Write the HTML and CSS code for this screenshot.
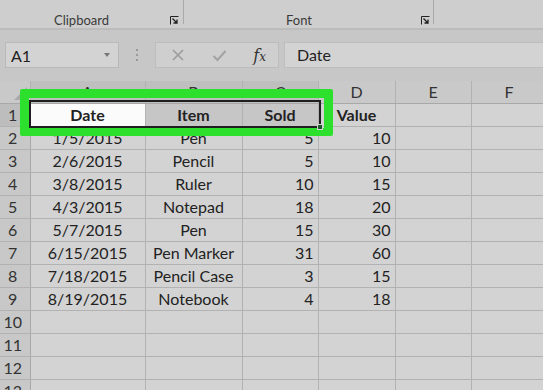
FILE: index.html
```html
<!DOCTYPE html>
<html lang="en">
<head>
  <meta charset="UTF-8">
  <title>Sheet - Date, Item, Sold</title>
  <link rel="stylesheet" href="styles.css">
</head>
<body>
  <div class="window">
    <!-- Ribbon (bottom edge only) -->
    <div class="ribbon">
      <div class="group group-clipboard">
        <span class="group-label">Clipboard</span>
        <svg class="launcher" width="9" height="9" viewBox="0 0 9 9"><path d="M0.5 8.5V0.5H8.5" fill="none" stroke="#222" stroke-width="1"/><path d="M2.5 2.5L7 7M7 3.5V7H3.5" fill="none" stroke="#222" stroke-width="1.3"/></svg>
      </div>
      <div class="group group-font">
        <span class="group-label">Font</span>
        <svg class="launcher" width="9" height="9" viewBox="0 0 9 9"><path d="M0.5 8.5V0.5H8.5" fill="none" stroke="#222" stroke-width="1"/><path d="M2.5 2.5L7 7M7 3.5V7H3.5" fill="none" stroke="#222" stroke-width="1.3"/></svg>
      </div>
      <div class="group group-rest"></div>
    </div>

    <!-- Name box + formula bar -->
    <div class="formula-row">
      <div class="name-box">
        <span>A1</span>
        <span class="caret"></span>
      </div>
      <div class="grip"><i></i><i></i><i></i></div>
      <div class="fx-buttons">
        <svg width="14" height="14" viewBox="0 0 14 14"><path d="M2 2L12 12M12 2L2 12" stroke="#9c9c9c" stroke-width="1.6"/></svg>
        <svg width="15" height="13" viewBox="0 0 15 13"><path d="M1.5 7L5.5 11L13.5 2" fill="none" stroke="#a3a3a3" stroke-width="2"/></svg>
        <span class="fx">f<small>x</small></span>
      </div>
      <div class="formula-input">Date</div>
    </div>

    <!-- Grid -->
    <div class="sheet">
      <table class="grid">
        <colgroup>
          <col class="c-row"><col class="c-a"><col class="c-b"><col class="c-c"><col class="c-d"><col class="c-e"><col class="c-f">
        </colgroup>
        <thead>
          <tr>
            <th class="corner"><span class="corner-mark"></span></th>
            <th class="col-sel">A</th><th class="col-sel">B</th><th class="col-sel">C</th><th>D</th><th>E</th><th>F</th>
          </tr>
        </thead>
        <tbody>
          <tr class="head-row">
            <th class="row-sel">1</th>
            <td class="active">Date</td><td class="sel">Item</td><td class="sel">Sold</td><td class="center">Value</td><td></td><td></td>
          </tr>
          <tr><th>2</th><td class="center">1/5/2015</td><td class="center">Pen</td><td class="num">5</td><td class="num">10</td><td></td><td></td></tr>
          <tr><th>3</th><td class="center">2/6/2015</td><td class="center">Pencil</td><td class="num">5</td><td class="num">10</td><td></td><td></td></tr>
          <tr><th>4</th><td class="center">3/8/2015</td><td class="center">Ruler</td><td class="num">10</td><td class="num">15</td><td></td><td></td></tr>
          <tr><th>5</th><td class="center">4/3/2015</td><td class="center">Notepad</td><td class="num">18</td><td class="num">20</td><td></td><td></td></tr>
          <tr><th>6</th><td class="center">5/7/2015</td><td class="center">Pen</td><td class="num">15</td><td class="num">30</td><td></td><td></td></tr>
          <tr><th>7</th><td class="center">6/15/2015</td><td class="center">Pen Marker</td><td class="num">31</td><td class="num">60</td><td></td><td></td></tr>
          <tr><th>8</th><td class="center">7/18/2015</td><td class="center">Pencil Case</td><td class="num">3</td><td class="num">15</td><td></td><td></td></tr>
          <tr><th>9</th><td class="center">8/19/2015</td><td class="center">Notebook</td><td class="num">4</td><td class="num">18</td><td></td><td></td></tr>
          <tr><th>10</th><td></td><td></td><td></td><td></td><td></td><td></td></tr>
          <tr><th>11</th><td></td><td></td><td></td><td></td><td></td><td></td></tr>
          <tr><th>12</th><td></td><td></td><td></td><td></td><td></td><td></td></tr>
          <tr><th>13</th><td></td><td></td><td></td><td></td><td></td><td></td></tr>
        </tbody>
      </table>

      <!-- Overlays: green callout and cell selection -->
      <div class="callout"></div>
      <div class="selection"><span class="fill-handle"></span></div>
    </div>
  </div>
</body>
</html>
```

FILE: styles.css
```css
* {
  margin: 0;
  padding: 0;
  box-sizing: border-box;
}

body {
  font-family: Lato, 'Open Sans', sans-serif;
  background-color: #c9c9c9;
  color: #222;
}

.window {
  width: 543px;
  height: 390px;
  overflow: hidden;
}

/* Ribbon */
.ribbon {
  display: flex;
  height: 30px;
  background-color: #cecece;
  border-bottom: 2px solid #bcbcbc;
}

.group {
  display: flex;
  align-items: flex-end;
  height: 24px;
  border-right: 1px solid #a9a9a9;
}

.group-clipboard {
  width: 184px;
}

.group-clipboard .group-label {
  width: 163px;
}

.group-font {
  width: 250px;
}

.group-font .group-label {
  width: 230px;
}

.group-rest {
  flex: 1;
  border-right: none;
}

.group-label {
  font-size: 13px;
  color: #3a3a3a;
  text-align: center;
  line-height: 15px;
  margin-bottom: -4px;
}

.launcher {
  margin-left: 7px;
  margin-bottom: -1px;
}

/* Formula row */
.formula-row {
  display: flex;
  align-items: center;
  height: 51px;
  padding-left: 5px;
  padding-bottom: 1px;
  background-color: #c7c7c7;
}

.name-box {
  display: flex;
  align-items: center;
  justify-content: space-between;
  width: 114px;
  height: 26px;
  padding: 0 8px 0 5px;
  background-color: #d3d3d3;
  border: 1px solid #b9b9b9;
  font-size: 16px;
}

.caret {
  width: 0;
  height: 0;
  border-left: 3px solid transparent;
  border-right: 3px solid transparent;
  border-top: 4px solid #777;
}

.grip {
  display: flex;
  flex-direction: column;
  gap: 3px;
  width: 36px;
  align-items: center;
}

.grip i {
  width: 2px;
  height: 2px;
  background-color: #999;
}

.fx-buttons {
  display: flex;
  align-items: center;
  justify-content: space-between;
  width: 124px;
  height: 26px;
  padding: 0 12px 0 15px;
  background-color: #cfcfcf;
  border: 1px solid #bdbdbd;
}

.fx {
  font-family: 'DejaVu Serif', 'Liberation Serif', serif;
  font-style: italic;
  font-size: 16px;
  color: #333;
}

.fx small {
  font-size: 12px;
}

.formula-input {
  flex: 1;
  height: 26px;
  margin-left: 5px;
  padding-left: 12px;
  background-color: #d3d3d3;
  border: 1px solid #bdbdbd;
  border-right: none;
  font-size: 16px;
  line-height: 24px;
}

/* Sheet */
.sheet {
  position: relative;
  background-color: #d3d3d3;
}

.grid {
  table-layout: fixed;
  border-collapse: collapse;
  width: 547px;
}

.c-row { width: 30px; }
.c-a { width: 115px; }
.c-b { width: 97px; }
.c-c { width: 76px; }
.c-d { width: 77px; }
.c-e { width: 76px; }
.c-f { width: 76px; }

.grid th,
.grid td {
  height: 23px;
  border-right: 1px solid #b2b2b2;
  border-bottom: 1px solid #b2b2b2;
  font-size: 16px;
  line-height: 20px;
  white-space: nowrap;
  overflow: hidden;
}

.grid thead th {
  height: 22px;
  font-weight: normal;
  font-size: 16px;
  color: #333;
  background-color: #c9c9c9;
  border-bottom: 1px solid #a8a8a8;
}

.grid thead th.col-sel {
  background-color: #bfbfbf;
}

.grid tbody th {
  font-weight: normal;
  text-align: center;
  padding-right: 4px;
  color: #333;
  background-color: #c8c8c8;
  border-right: 1px solid #a8a8a8;
}

.grid tbody th.row-sel {
  background-color: #bdbdbd;
}

.corner {
  position: relative;
}

.corner-mark {
  position: absolute;
  right: 3px;
  bottom: 3px;
  width: 0;
  height: 0;
  border-left: 13px solid transparent;
  border-bottom: 13px solid #a9a9a9;
}

.grid td.center {
  text-align: center;
}

.grid td.num {
  text-align: right;
  padding-right: 4px;
}

.head-row td {
  font-weight: bold;
  text-align: center;
}

.grid td.active {
  background-color: #fbfbfb;
}

.grid td.sel {
  background-color: #c6c6c6;
}

.callout {
  position: absolute;
  left: 20px;
  top: 8px;
  width: 313px;
  height: 47px;
  border: 9px solid #2de02d;
  border-bottom-width: 8px;
  border-radius: 2px;
}

.selection {
  position: absolute;
  left: 29px;
  top: 19px;
  width: 292px;
  height: 28px;
  border: 2px solid #1f1f1f;
}

.fill-handle {
  position: absolute;
  right: -4px;
  bottom: -4px;
  width: 6px;
  height: 6px;
  background-color: #1d5a2c;
  border: 1px solid #d3d3d3;
}
```
